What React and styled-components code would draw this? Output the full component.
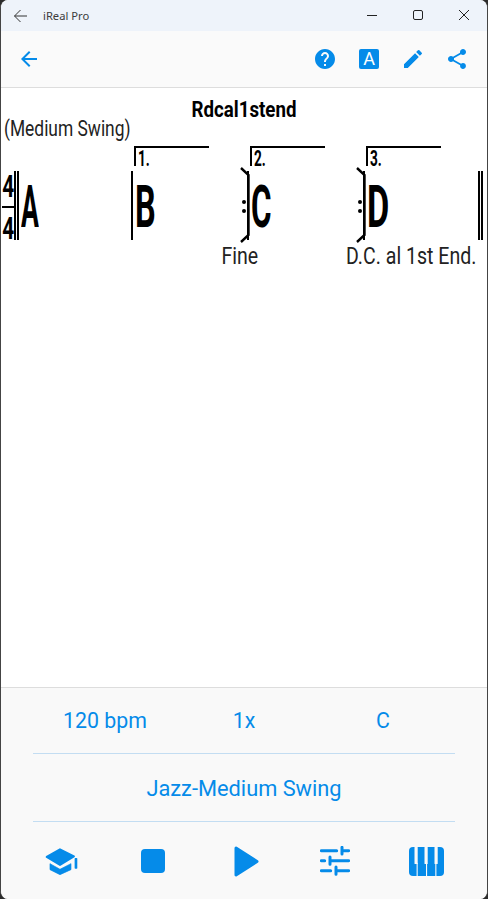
import React from 'react'
import styled, {createGlobalStyle} from 'styled-components'
import {MdArrowBack, MdHelp, MdEdit, MdShare} from 'react-icons/md'

const BLUE = '#058be9';

const GlobalStyle = createGlobalStyle`
    html, body {
        margin: 0;
        padding: 0;
        background: #2b2b2b;
    }
`;

const Win = styled.div`
    box-sizing: border-box;
    width: 488px;
    height: 899px;
    display: flex;
    flex-direction: column;
    border-left: 1px solid #444;
    border-right: 1px solid #444;
    border-radius: 8px;
    overflow: hidden;
    background: #fff;
    font-family: Roboto, sans-serif;
`;

const TitleBar = styled.div`
    height: 31px;
    flex: none;
    display: flex;
    align-items: center;
    background: #eef3fa;
    color: #333;
    padding-left: 12px;
`;

const TitleText = styled.span`
    font-family: "Noto Sans", sans-serif;
    font-size: 11.2px;
    margin-left: 14px;
    flex: 1;
    color: #3c3c3c;
`;

const WinButton = styled.svg`
    width: 46px;
    height: 31px;
    flex: none;
    fill: none;
    stroke: #222;
    stroke-width: 1;
`;

const Toolbar = styled.div`
    height: 57px;
    flex: none;
    box-sizing: border-box;
    display: flex;
    align-items: center;
    gap: 20px;
    padding: 0 18px 0 16px;
    background: #fafafa;
    border-bottom: 1px solid #ddd;
    color: ${BLUE};
    font-size: 24px;
    svg { display: block; }
`;

const Spacer = styled.div`
    flex: 1;
`;

const ABox = styled.span`
    width: 20px;
    height: 20px;
    margin: 0 2px;
    background: ${BLUE};
    border-radius: 2px;
    color: #fff;
    font-size: 18px;
    line-height: 20px;
    text-align: center;
`;

const Sheet = styled.div`
    flex: 1;
    color: #000;
    overflow: hidden;
`;

const Condensed = styled.div`
    transform-origin: ${p => p.$origin || 'left'} center;
    transform: scaleX(${p => p.$x || 0.8});
    white-space: nowrap;
`;

const SongTitle = styled(Condensed)`
    font-size: 22px;
    font-weight: 700;
    line-height: 26px;
    text-align: center;
    margin-top: 9px;
`;

const Style = styled(Condensed)`
    font-size: 22px;
    line-height: 26px;
    margin: -7px 0 0 3px;
    color: #222;
`;

const Chart = styled.div`
    display: flex;
    align-items: stretch;
    height: 69px;
    margin-top: 29px;
`;

const TimeSig = styled.div`
    width: 12px;
    margin-left: 1px;
    display: flex;
    flex-direction: column;
    align-items: center;
`;

const SigDigit = styled.span`
    font-size: 32px;
    font-weight: 700;
    line-height: 31px;
    height: 31px;
    flex: none;
    transform: scaleX(0.65);
`;

const SigLine = styled.div`
    width: 12px;
    height: 2px;
    flex: none;
    margin: 4px 0 5px;
    background: #000;
`;

const Measure = styled.div`
    position: relative;
    width: ${p => p.$w || 116.5}px;
    box-sizing: border-box;
    display: flex;
    align-items: center;
    padding: 3px 0 0 2px;
    ${p => p.$double
        ? 'border-left: 5px double #000;'
        : 'border-left: 2px solid #000;'}
`;

const Chord = styled.span`
    font-size: 59px;
    font-weight: 700;
    line-height: 66px;
    transform-origin: left center;
    transform: scaleX(${p => p.$x || 0.5});
`;

const Ending = styled.div`
    position: absolute;
    left: 1px;
    top: -25px;
    width: 75px;
    height: 20px;
    border-top: 2px solid #000;
    border-left: 2px solid #000;
    font-size: 22px;
    font-weight: 700;
    line-height: 22px;
    padding-left: 2px;
    box-sizing: border-box;
`;

const EndingLabel = styled.span`
    display: inline-block;
    transform-origin: left center;
    transform: scaleX(0.62);
`;

const RepeatMark = styled.div`
    position: absolute;
    left: -10px;
    top: -4px;
    width: 12px;
    height: 76px;
    svg { display: block; }
`;

const Note = styled(Condensed)`
    position: absolute;
    top: 70px;
    right: ${p => p.$right}px;
    font-size: 23px;
    line-height: 32px;
    color: #222;
    transform-origin: right center;
`;

const FinalBar = styled.div`
    width: 4px;
    margin-left: -1px;
    border-left: 5px double #000;
`;

const Panel = styled.div`
    flex: none;
    height: 212px;
    box-sizing: border-box;
    background: #f9f9f9;
    border-top: 1px solid #ddd;
    color: ${BLUE};
    font-size: 21.3px;
`;

const InfoRow = styled.div`
    height: 65px;
    margin: 0 32px;
    display: grid;
    grid-template-columns: 144px 134px 1fr;
    align-items: center;
    text-align: center;
    border-bottom: 1px solid #c3ddf2;
`;

const StyleRow = styled(InfoRow)`
    grid-template-columns: 1fr;
    padding-top: 2px;
    font-size: 21.8px;
`;

const Controls = styled.div`
    height: 78px;
    box-sizing: border-box;
    padding-left: 15.5px;
    display: grid;
    grid-template-columns: repeat(5, 91px);
    align-items: center;
    justify-items: center;
    svg { display: block; fill: ${BLUE}; }
`;

const PlayIcon = styled.svg`
    margin-left: 4px;
`;

const School = () => (
    <svg width="33.3" height="28.3" viewBox="50 35 100 85">
        <path d="M55 65 L95 42 L137 63 L95 89 Z" stroke={BLUE} strokeWidth="6" strokeLinejoin="round"/>
        <path d="M65 85 L95 102 L128 85 L128 103 L95 118 L65 103 Z" stroke={BLUE} strokeWidth="2" strokeLinejoin="round"/>
        <rect x="139" y="68" width="8" height="32" rx="2"/>
    </svg>
);

const Stop = () => (
    <svg width="24" height="24" viewBox="0 0 24 24"><rect width="24" height="24" rx="4"/></svg>
);

const Play = () => (
    <PlayIcon width="25" height="31" viewBox="0 0 25 31">
        <path d="M2 2 L23 15.5 L2 29 Z" stroke={BLUE} strokeWidth="3" strokeLinejoin="round"/>
    </PlayIcon>
);

const Tune = () => (
    <svg width="30" height="30" viewBox="30 33 90 90" fill="none">
        <g stroke={BLUE} strokeWidth="9" strokeLinecap="round" fill="none">
            <path d="M34 47H80M100 47H116M96 37V57"/>
            <path d="M34 77H44M64 77H116M60 66V88"/>
            <path d="M34 107H62M82 107H116M78 96V118"/>
        </g>
    </svg>
);

const Piano = () => (
    <svg width="35" height="29" viewBox="0 0 35 29">
        <rect width="35" height="29" rx="4"/>
        <g fill="#f9f9f9">
            <rect x="5.5" y="0" width="3.2" height="17" rx="0.6"/>
            <rect x="15.5" y="0" width="3.2" height="17" rx="0.6"/>
            <rect x="25.5" y="0" width="3.2" height="17" rx="0.6"/>
            <rect x="7.6" y="16" width="1.1" height="13"/>
            <rect x="17" y="16" width="1.1" height="13"/>
            <rect x="26.3" y="16" width="1.1" height="13"/>
        </g>
    </svg>
);

const Repeat = () => (
    <svg viewBox="0 0 12 76" width="12" height="76">
        <path d="M2 1 L9.5 8 V68 L2 75" fill="none" stroke="#000" strokeWidth="2.4"/>
        <circle cx="5" cy="35" r="2"/>
        <circle cx="5" cy="44" r="2"/>
    </svg>
);

const App = () => {
    return (
        <Win>
            <GlobalStyle/>
            <TitleBar>
                <svg width="16" height="14" viewBox="0 0 16 14" fill="none" stroke="#333">
                    <path d="M14 7H1.5M7.5 1L1.5 7L7.5 13"/>
                </svg>
                <TitleText>iReal Pro</TitleText>
                <WinButton viewBox="0 0 46 31"><path d="M18 15.5H28"/></WinButton>
                <WinButton viewBox="0 0 46 31"><rect x="18.5" y="10.5" width="9" height="9" rx="1.5"/></WinButton>
                <WinButton viewBox="0 0 46 31"><path d="M18 10L28 20M28 10L18 20"/></WinButton>
            </TitleBar>
            <Toolbar>
                <MdArrowBack/>
                <Spacer/>
                <MdHelp/>
                <ABox>A</ABox>
                <MdEdit/>
                <MdShare/>
            </Toolbar>
            <Sheet>
                <SongTitle $origin="center" $x={0.85}>Rdcal1stend</SongTitle>
                <Style $x={0.79}>(Medium Swing)</Style>
                <Chart>
                    <TimeSig>
                        <SigDigit>4</SigDigit>
                        <SigLine/>
                        <SigDigit>4</SigDigit>
                    </TimeSig>
                    <Measure $double $w={118}>
                        <Chord $x={0.45}>A</Chord>
                    </Measure>
                    <Measure>
                        <Ending><EndingLabel>1.</EndingLabel></Ending>
                        <Chord $x={0.55}>B</Chord>
                    </Measure>
                    <Measure>
                        <RepeatMark><Repeat/></RepeatMark>
                        <Ending><EndingLabel>2.</EndingLabel></Ending>
                        <Chord $x={0.53}>C</Chord>
                        <Note $right={105} $x={0.85}>Fine</Note>
                    </Measure>
                    <Measure>
                        <RepeatMark><Repeat/></RepeatMark>
                        <Ending><EndingLabel>3.</EndingLabel></Ending>
                        <Chord $x={0.58}>D</Chord>
                        <Note $right={3} $x={0.85}>D.C. al 1st End.</Note>
                    </Measure>
                    <FinalBar/>
                </Chart>
            </Sheet>
            <Panel>
                <InfoRow>
                    <span>120 bpm</span>
                    <span>1x</span>
                    <span>C</span>
                </InfoRow>
                <StyleRow>
                    <span>Jazz-Medium Swing</span>
                </StyleRow>
                <Controls>
                    <School/>
                    <Stop/>
                    <Play/>
                    <Tune/>
                    <Piano/>
                </Controls>
            </Panel>
        </Win>
    )
}

export default App;
